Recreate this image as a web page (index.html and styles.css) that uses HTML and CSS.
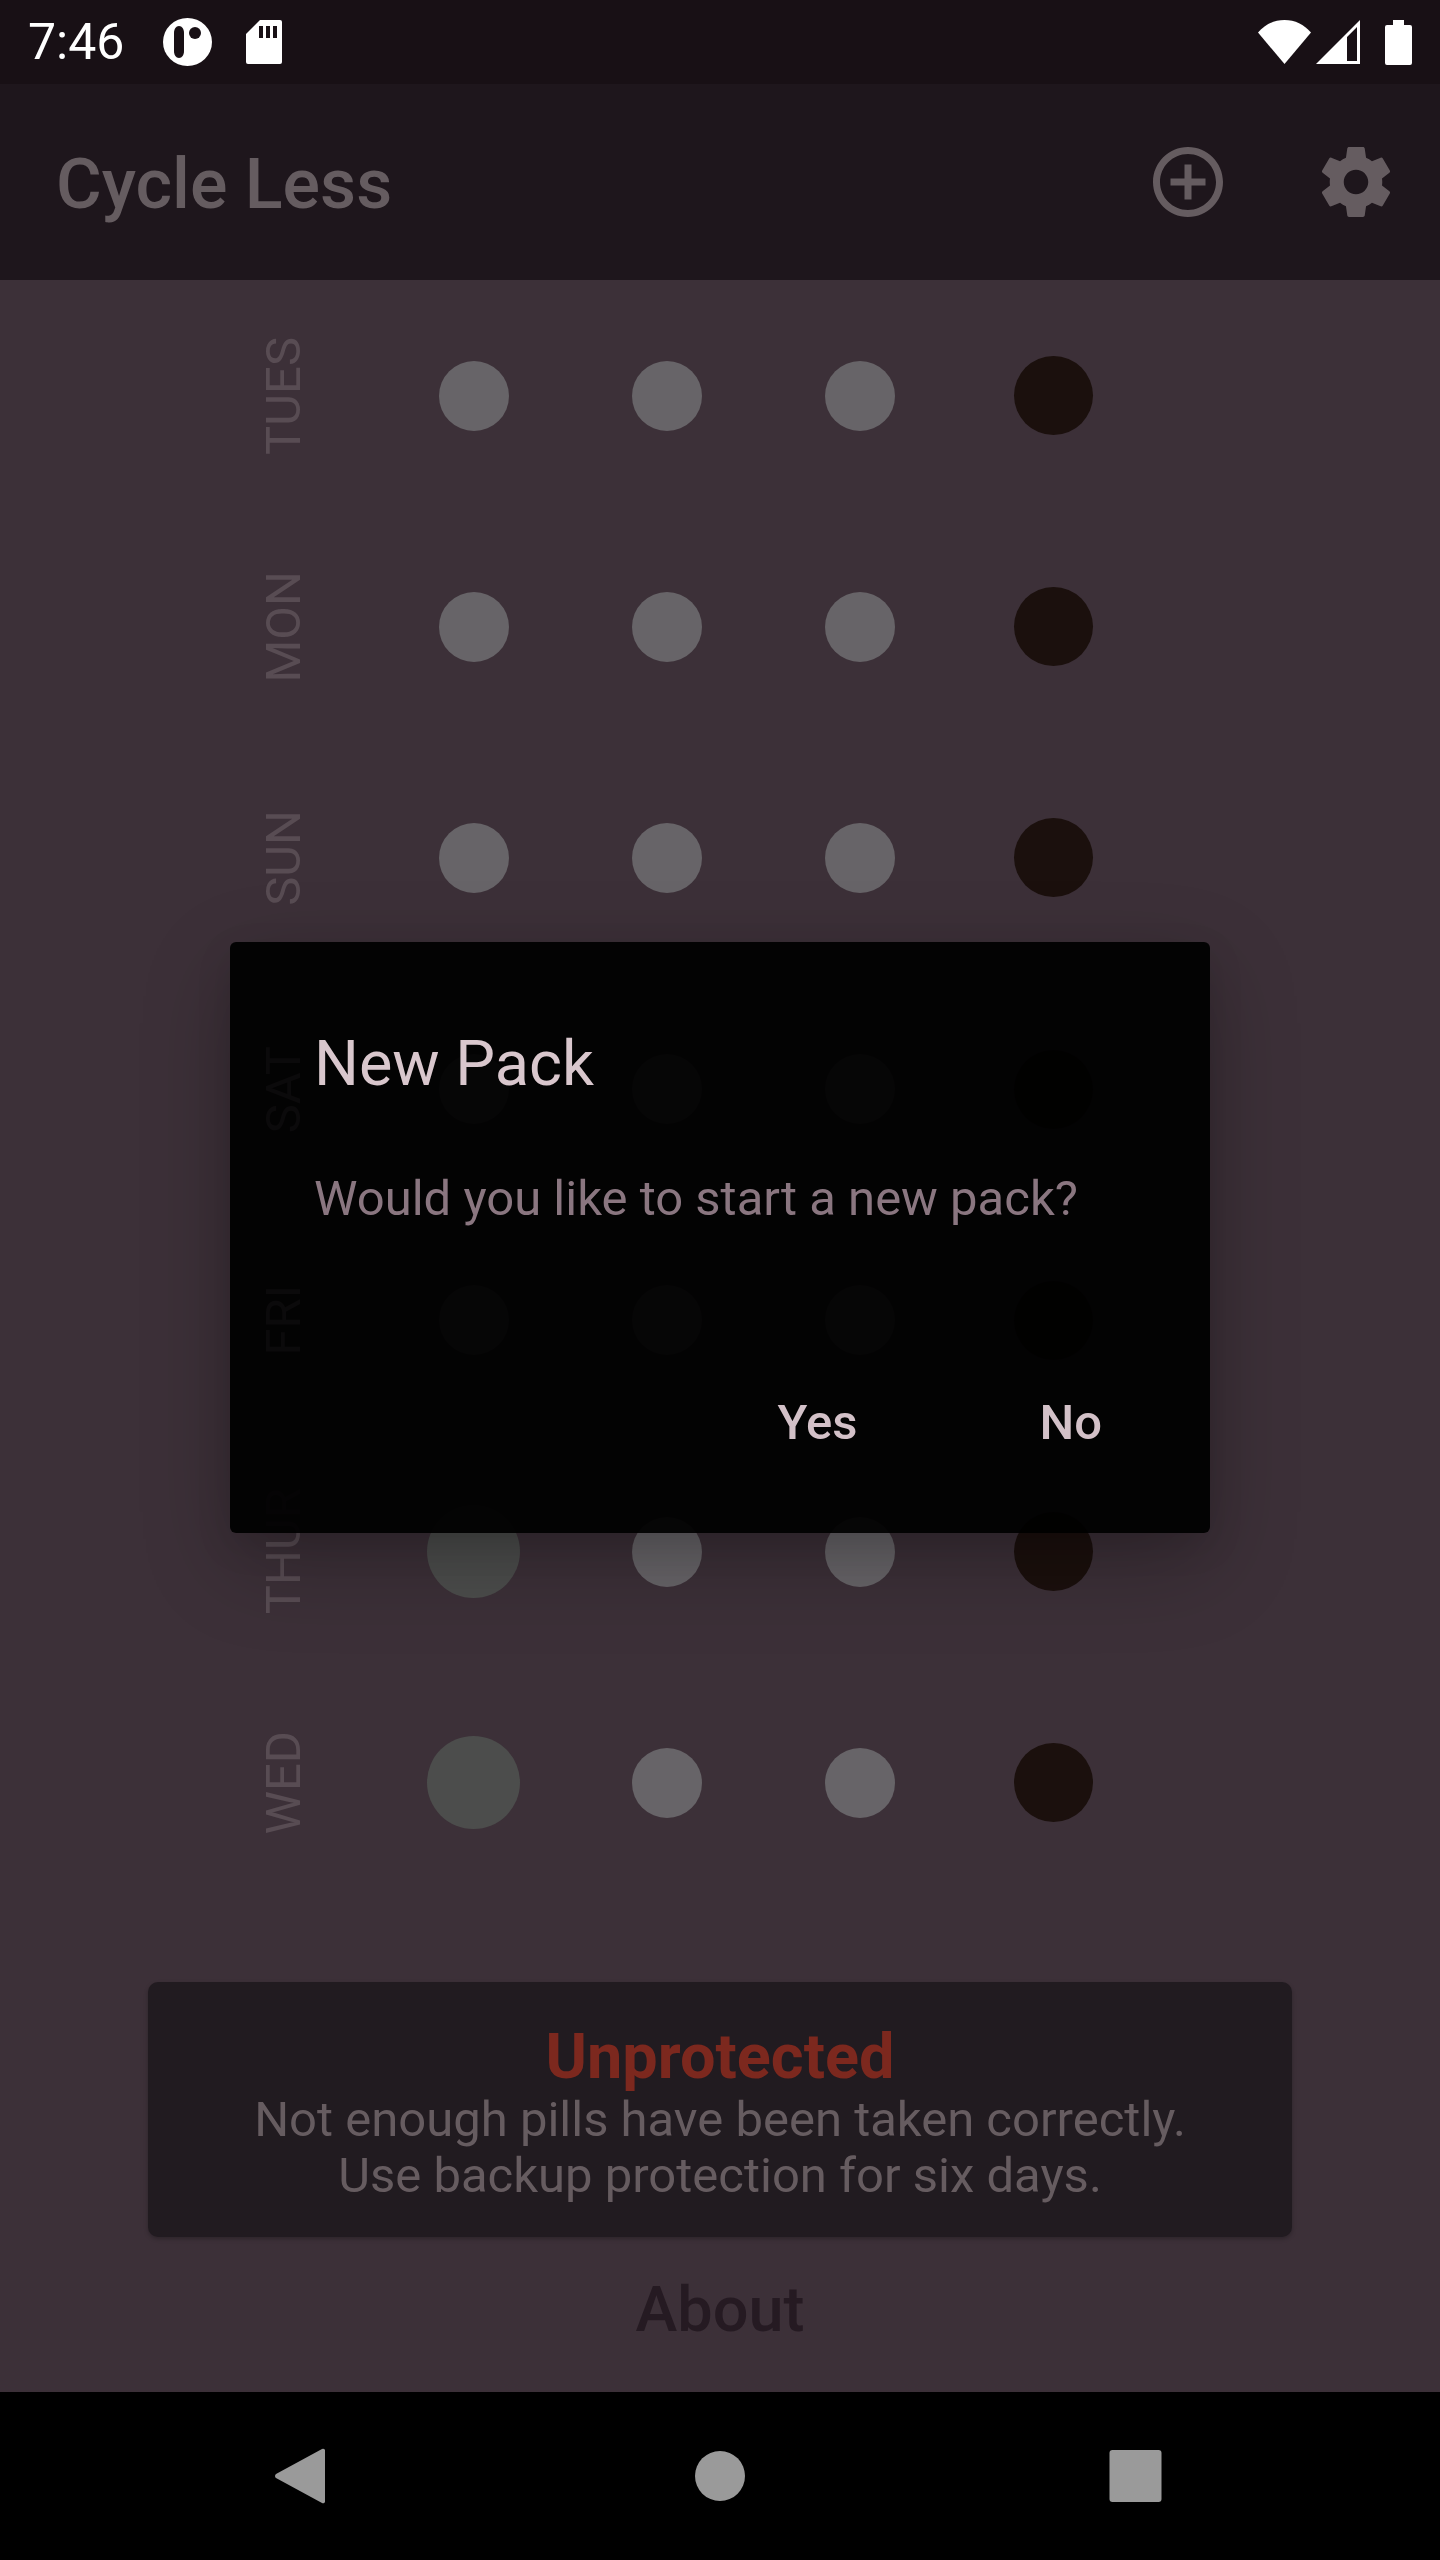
FILE: index.html
```html
<!DOCTYPE html>
<html lang="en">
<head>
<meta charset="utf-8">
<title>Cycle Less</title>
<link rel="stylesheet" href="styles.css">
</head>
<body>
<div class="phone">
  <header class="status">
    <div class="status-left">
      <span class="time">7:46</span>
      <svg class="ic-round" viewBox="0 0 49 48"><ellipse cx="24.500" cy="24" rx="24.500" ry="24" fill="#fff"/><path d="M11 15c0-4 2-7 5-7s5 3 5 7v18c0 4-2 7-5 7s-5-3-5-7z" fill="#181015"/><circle cx="32" cy="15" r="6" fill="#181015"/></svg>
      <svg class="ic-sd" viewBox="0 0 36 44"><path d="M14 0h20a2 2 0 0 1 2 2v40a2 2 0 0 1-2 2H2a2 2 0 0 1-2-2V14z" fill="#fff"/><path d="M13 6h4v12h-4zM20 6h4v12h-4zM27 6h4v12h-4z" fill="#181015"/></svg>
    </div>
    <div class="status-right">
      <svg class="ic-wifi" viewBox="0 0 53 44"><path d="M0 12.500C7 4.500 16 0 26.500 0S46 4.500 53 12.500L26.500 44z" fill="#fff"/></svg>
      <svg class="ic-signal" viewBox="0 0 44 44"><path fill-rule="evenodd" d="M44 0v44H0zM41 7v34H31V17z" fill="#fff"/></svg>
      <svg class="ic-batt" viewBox="0 0 27 45"><path d="M8 0h11v5h6a2 2 0 0 1 2 2v36a2 2 0 0 1-2 2H2a2 2 0 0 1-2-2V7a2 2 0 0 1 2-2h6z" fill="#fff"/></svg>
    </div>
  </header>

  <div class="appbar">
    <h1 class="app-title">Cycle Less</h1>
    <div class="app-actions">
      <svg class="app-icon" viewBox="0 0 24 24"><path d="M13 7h-2v4H7v2h4v4h2v-4h4v-2h-4V7zm-1-5C6.480 2 2 6.480 2 12s4.480 10 10 10 10-4.480 10-10S17.520 2 12 2zm0 18c-4.410 0-8-3.590-8-8s3.590-8 8-8 8 3.590 8 8-3.590 8-8 8z"/></svg>
      <svg class="app-icon" viewBox="0 0 24 24"><path d="M19.430 12.980c.04-.32.07-.64.07-.98s-.03-.66-.07-.98l2.110-1.650c.19-.15.24-.42.12-.64l-2-3.460c-.12-.22-.39-.3-.61-.22l-2.490 1c-.52-.4-1.080-.73-1.690-.98l-.38-2.650C14.460 2.180 14.250 2 14 2h-4c-.25 0-.46.18-.49.42l-.38 2.650c-.61.25-1.170.59-1.690.98l-2.490-1c-.23-.09-.49 0-.61.22l-2 3.460c-.13.22-.07.49.12.64l2.110 1.650c-.04.32-.07.65-.07.98s.03.66.07.98l-2.110 1.650c-.19.15-.24.42-.12.64l2 3.460c.12.22.39.3.61.22l2.490-1c.52.4 1.080.73 1.690.98l.38 2.650c.03.24.24.42.49.42h4c.25 0 .46-.18.49-.42l.38-2.650c.61-.25 1.170-.59 1.690-.98l2.490 1c.23.09.49 0 .61-.22l2-3.460c.12-.22.07-.49-.12-.64l-2.110-1.650zM12 15.500c-1.930 0-3.500-1.570-3.500-3.500s1.570-3.500 3.500-3.500 3.500 1.570 3.500 3.500-1.570 3.500-3.500 3.500z"/></svg>
    </div>
  </div>

  <main class="content">
    <section class="pack">
      <div class="row"><span class="day">TUES</span><i class="dot"></i><i class="dot"></i><i class="dot"></i><i class="dot dark"></i></div>
      <div class="row"><span class="day">MON</span><i class="dot"></i><i class="dot"></i><i class="dot"></i><i class="dot dark"></i></div>
      <div class="row"><span class="day">SUN</span><i class="dot"></i><i class="dot"></i><i class="dot"></i><i class="dot dark"></i></div>
      <div class="row"><span class="day under">SAT</span><i class="dot"></i><i class="dot"></i><i class="dot"></i><i class="dot dark"></i></div>
      <div class="row"><span class="day under">FRI</span><i class="dot"></i><i class="dot"></i><i class="dot"></i><i class="dot dark"></i></div>
      <div class="row"><span class="day">THUR</span><i class="dot big"></i><i class="dot"></i><i class="dot"></i><i class="dot dark"></i></div>
      <div class="row"><span class="day">WED</span><i class="dot big"></i><i class="dot"></i><i class="dot"></i><i class="dot dark"></i></div>
    </section>
    <section class="banner">
      <h2 class="banner-title">Unprotected</h2>
      <p class="banner-text">Not enough pills have been taken correctly.<br>Use backup protection for six days.</p>
    </section>
    <div class="about">About</div>
  </main>

  <nav class="navbar">
    <svg class="nav-back" viewBox="0 0 50 56"><path d="M47 1a2 2 0 0 1 3 2v50a2 2 0 0 1-3 2L1 30a2.500 2.500 0 0 1 0-4z"/></svg>
    <svg class="nav-home" viewBox="0 0 50 50"><circle cx="25" cy="25" r="25"/></svg>
    <svg class="nav-recent" viewBox="0 0 52 52"><rect width="52" height="52" rx="3"/></svg>
  </nav>

  <div class="dialog">
    <h3 class="dialog-title">New Pack</h3>
    <p class="dialog-text">Would you like to start a new pack?</p>
    <div class="dialog-actions">
      <span class="dialog-btn">Yes</span>
      <span class="dialog-btn">No</span>
    </div>
  </div>
</div>
</body>
</html>
```

FILE: styles.css
```css
* { box-sizing: border-box; margin: 0; padding: 0; }
html, body { background: #000; }
body { font-family: Roboto, "Liberation Sans", sans-serif; }

.phone {
  position: relative;
  width: 1440px;
  height: 2560px;
  display: flex;
  flex-direction: column;
  overflow: hidden;
  background: #3c3038;
}

.status {
  height: 84px;
  background: #181015;
  display: flex;
  justify-content: space-between;
  align-items: center;
  padding: 0 28px;
}
.status-left, .status-right { display: flex; align-items: center; }
.time { color: #fff; font-size: 50px; line-height: 86px; width: 135px; }
.ic-round { width: 49px; height: 48px; margin-right: 34px; }
.ic-sd { width: 36px; height: 44px; }
.ic-wifi { width: 53px; height: 44px; margin-right: 5px; }
.ic-signal { width: 44px; height: 44px; margin-right: 25px; }
.ic-batt { width: 27px; height: 45px; }

.appbar {
  height: 196px;
  background: #1e161c;
  display: flex;
  align-items: center;
  justify-content: space-between;
  padding: 0 42px 0 56px;
}
.app-title { font-size: 70px; font-weight: 500; color: #655c60; padding-top: 3px; }
.app-actions { display: flex; gap: 84px; }
.app-icon { width: 84px; height: 84px; fill: #655c60; display: block; }

.content { flex: 1; display: flex; flex-direction: column; align-items: center; }
.pack { width: 100%; padding-left: 184px; }
.row {
  height: 231.2px;
  display: grid;
  grid-template-columns: repeat(5, 193px);
  align-items: center;
  justify-items: center;
}
.day {
  writing-mode: vertical-rl;
  transform: rotate(180deg);
  margin-left: 6px;
  font-size: 49px;
  color: #584c53;
}
.day.under { color: #b8a8b0; }
.dot { display: block; width: 70px; height: 70px; border-radius: 50%; background: #676468; }
.dot.dark { width: 79px; height: 79px; margin-left: 2px; background: #1b100d; }
.dot.big { width: 93px; height: 93px; background: #4c4d4c; }

.banner {
  width: 1144px;
  height: 255px;
  margin-top: 83.6px;
  background: #211b20;
  border-radius: 10px;
  box-shadow: 0 2px 4px rgba(0, 0, 0, .25);
  text-align: center;
  padding-top: 39px;
}
.banner-title { font-size: 63px; font-weight: 700; color: #7c281e; line-height: 71px; }
.banner-text { font-size: 49px; color: #665c60; line-height: 56px; }
.about { margin-top: 36px; font-size: 63px; font-weight: 500; color: #251a22; }

.navbar {
  height: 168px;
  background: #000;
  display: flex;
  align-items: center;
  justify-content: center;
  padding-right: 4px;
}
.navbar svg { fill: #9a9a9a; display: block; }
.nav-back { width: 50px; height: 56px; margin-right: 370px; }
.nav-home { width: 50px; height: 50px; margin-right: 364px; }
.nav-recent { width: 53px; height: 52px; }

.dialog {
  position: absolute;
  left: 230px;
  top: 942px;
  width: 980px;
  height: 591px;
  background: rgba(0, 0, 0, .94);
  border-radius: 6px;
  box-shadow: 0 30px 90px rgba(0, 0, 0, .24), 0 12px 36px rgba(0, 0, 0, .1);
  padding: 86px 84px 0;
}
.dialog-title { font-size: 63px; font-weight: 400; color: #d9c7cd; line-height: 72px; }
.dialog-text { margin-top: 71px; font-size: 49px; color: #8a7680; line-height: 56px; }
.dialog-actions { position: absolute; right: 108px; bottom: 83px; display: flex; gap: 182px; }
.dialog-btn { font-size: 49px; font-weight: 500; color: #d3c1c8; line-height: 54px; }
```
